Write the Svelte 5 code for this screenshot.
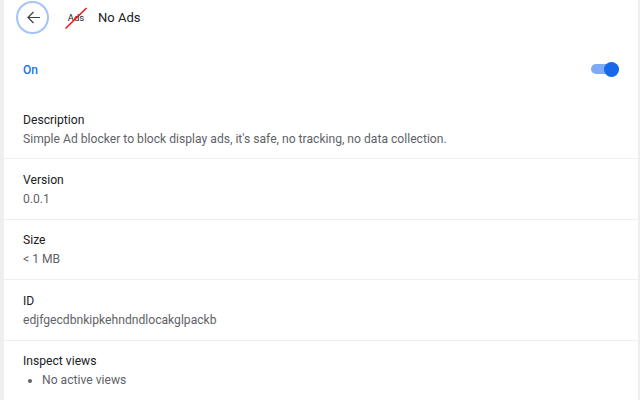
<script lang="ts">
  const rows = [
    { label: "Description", value: "Simple Ad blocker to block display ads, it's safe, no tracking, no data collection." },
    { label: "Version", value: "0.0.1" },
    { label: "Size", value: "< 1 MB" },
    { label: "ID", value: "edjfgecdbnkipkehndndlocakglpackb" },
  ];
  let enabled = $state(true);
</script>

<div class="page">
  <main class="card">
    <header>
      <button class="back" aria-label="Back">
        <svg width="13" height="13" viewBox="0 0 13 13" fill="none" stroke="#3c4043" stroke-width="1.2">
          <path d="M13 6.5H1M6.5 1 1 6.5 6.5 12" />
        </svg>
      </button>
      <span class="logo">
        <span>Ads</span>
        <svg width="22" height="22" viewBox="0 0 22 22"><path d="M0.5 21.5 21.5 1" stroke="#ff0000" stroke-width="1.3" /></svg>
      </span>
      <h1>No Ads</h1>
    </header>

    <div class="state">
      <span class="on">{enabled ? "On" : "Off"}</span>
      <button class="toggle" aria-label="Toggle" onclick={() => (enabled = !enabled)}>
        <span class="knob"></span>
      </button>
    </div>

    {#each rows as r}
      <section>
        <div class="label">{r.label}</div>
        <div class="value">{r.value}</div>
      </section>
    {/each}

    <section class="last">
      <div class="label">Inspect views</div>
      <ul><li>No active views</li></ul>
    </section>
  </main>
</div>

<style>
  :global(body) { margin: 0; background: #fff; overflow: hidden; }
  .page {
    height: 400px; overflow: hidden;
    background: #eeeeee;
    padding: 0 2px 0 4px;
    font-family: Roboto, "Liberation Sans", sans-serif;
    font-size: 12.13px; color: #5f6368;
  }
  .card {
    height: 400px;
    background: #fff;
    box-sizing: border-box;
  }
  header { display: flex; align-items: center; height: 35px; padding-left: 12px; }
  .back {
    width: 33px; height: 33px; border-radius: 50%;
    border: 2px solid #a3c4fa; background: #fff; padding: 0 0 0 1px;
    display: flex; align-items: center; justify-content: center;
    box-sizing: border-box;
  }
  .logo { position: relative; width: 22px; height: 22px; margin-left: 16px; display: flex; align-items: center; justify-content: center; font-size: 9.5px; color: #202124; }
  .logo svg { position: absolute; left: 0; top: 0; }
  h1 { margin: 0 0 0 11px; font-size: 13px; font-weight: 400; color: #202124; }
  .state { display: flex; align-items: center; justify-content: space-between; height: 64px; padding: 5px 19px 0 19px; box-sizing: border-box; }
  .on { font-weight: 500; color: #1a73e8; font-size: 12px; }
  .toggle { position: relative; width: 28px; height: 10px; border: 0; padding: 0; border-radius: 5px; background: #7fabf5; margin-top: -1px; }
  .knob { position: absolute; right: 0; top: -2.5px; width: 15px; height: 15px; border-radius: 50%; background: #1a68ea; }
  section { height: 60.4px; padding: 10.6px 19px 0; box-sizing: border-box; border-bottom: 1px solid #efefef; line-height: 20px; }
  section.last { border: 0; padding-top: 10px; }
  .label { color: #202124; }
  .value { margin-top: -1px; }
  ul { margin: -1px 0 0; padding-left: 19px; }
</style>
